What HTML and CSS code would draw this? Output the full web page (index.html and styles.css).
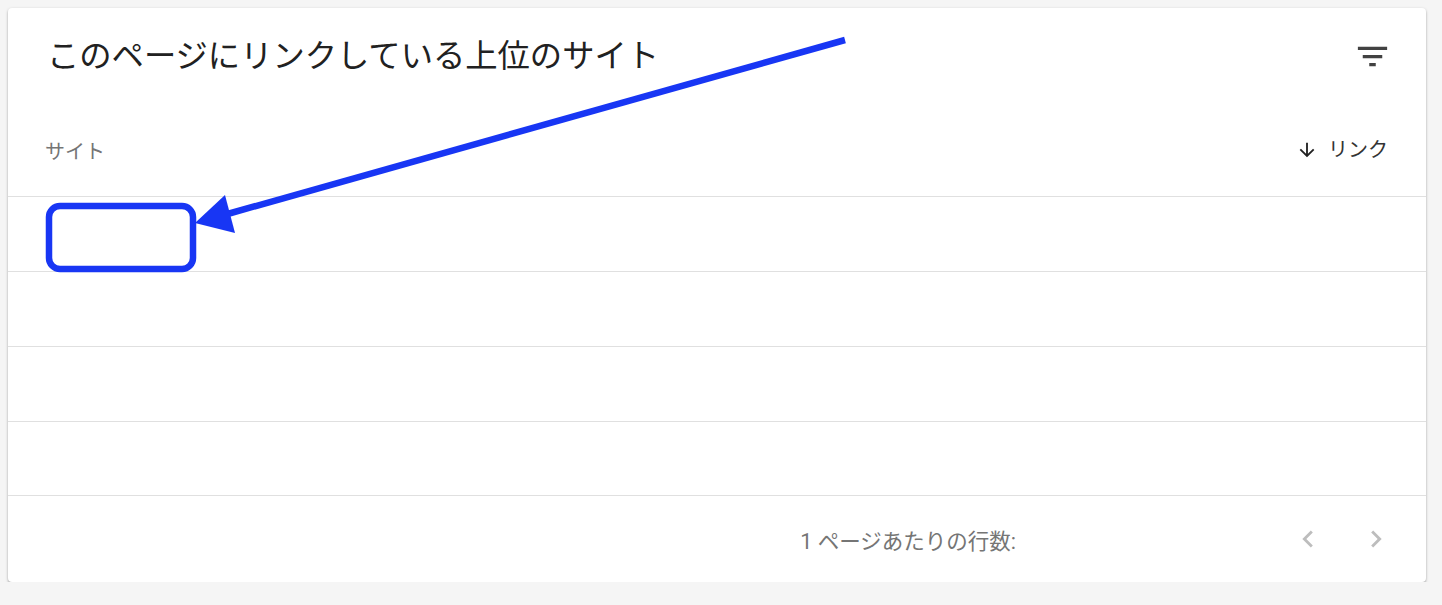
FILE: index.html
```html
<!DOCTYPE html>
<html lang="ja">
<head>
    <meta charset="UTF-8">
    <meta name="viewport" content="width=device-width, initial-scale=1.0">
    <title>このページにリンクしている上位のサイト</title>
    <link rel="stylesheet" href="styles.css">
</head>
<body>
    <div class="card">
        <div class="card-header">
            <h1>このページにリンクしている上位のサイト</h1>
            <svg class="filter-icon" viewBox="0 0 24 24"><path d="M10 18h4v-2h-4v2zM3 6v2h18V6H3zm3 7h12v-2H6v2z"/></svg>
        </div>
        <table class="sites">
            <thead>
                <tr>
                    <th class="col-site">サイト</th>
                    <th class="col-links">
                        <span class="sort">
                            <svg class="sort-icon" viewBox="0 0 24 24"><path d="M20 12l-1.41-1.41L13 16.17V4h-2v12.17l-5.58-5.59L4 12l8 8 8-8z"/></svg>
                            リンク
                        </span>
                    </th>
                </tr>
            </thead>
            <tbody>
                <tr><td></td><td></td></tr>
                <tr><td></td><td></td></tr>
                <tr><td></td><td></td></tr>
                <tr class="last-row"><td></td><td></td></tr>
            </tbody>
        </table>
        <div class="card-footer">
            <span class="rows-label">1 ページあたりの行数:</span>
            <button class="page-btn" type="button">
                <svg viewBox="0 0 24 24"><path d="M15.41 7.41L14 6l-6 6 6 6 1.41-1.41L10.83 12z"/></svg>
            </button>
            <button class="page-btn" type="button">
                <svg viewBox="0 0 24 24"><path d="M10 6L8.59 7.41 13.17 12l-4.58 4.59L10 18l6-6z"/></svg>
            </button>
        </div>
    </div>

    <!-- annotation drawn over the screenshot -->
    <svg class="annotation" width="1442" height="605" viewBox="0 0 1442 605">
        <rect x="49" y="206" width="144" height="63" rx="11" ry="11"/>
        <line x1="845" y1="40" x2="224" y2="215"/>
        <polygon points="195,223 225,195 235,233"/>
    </svg>
</body>
</html>
```

FILE: styles.css
```css
body {
    margin: 0;
    padding: 8px 16px 0 8px;
    background-color: #f5f5f5;
    font-family: Roboto, 'Noto Sans CJK JP', sans-serif;
}

.card {
    height: 574px;
    background-color: #fff;
    border-radius: 4px;
    box-shadow: 0 1px 3px rgba(0, 0, 0, 0.25), 0 2px 2px rgba(0, 0, 0, 0.12);
    display: flex;
    flex-direction: column;
}

.card-header {
    display: flex;
    justify-content: space-between;
    align-items: center;
    padding: 25px 34px 0 39px;
}

h1 {
    margin: 0;
    font-size: 32.3px;
    line-height: 46px;
    font-weight: 400;
    color: #212121;
}

.filter-icon {
    width: 39px;
    height: 39px;
    fill: #424242;
}

.sites {
    width: 100%;
    border-collapse: collapse;
}

.sites th {
    padding: 57px 0 28px;
    font-size: 20px;
    line-height: 28px;
    font-weight: 400;
}

.col-site {
    text-align: left;
    padding-left: 37px !important;
    color: #757575;
}

.col-links {
    text-align: right;
    padding-right: 38px !important;
    color: #333;
}

.sort {
    display: inline-flex;
    align-items: center;
    gap: 10px;
}

.sort-icon {
    width: 22px;
    height: 22px;
    fill: #212121;
}

.sites td {
    height: 74px;
    padding: 0;
    border-top: 1px solid #e0e0e0;
}

.sites .last-row td {
    height: 73px;
}

.card-footer {
    flex: 1;
    display: flex;
    justify-content: flex-end;
    align-items: center;
    padding-right: 33px;
    border-top: 1px solid #e0e0e0;
}

.rows-label {
    font-size: 21.5px;
    color: #757575;
    margin-right: 275px;
}

.page-btn {
    width: 34px;
    height: 34px;
    padding: 0;
    border: none;
    background: none;
}

.page-btn + .page-btn {
    margin-left: 34px;
}

.page-btn svg {
    width: 34px;
    height: 34px;
    fill: #bdbdbd;
}

.annotation {
    position: absolute;
    top: 0;
    left: 0;
    pointer-events: none;
}

.annotation rect,
.annotation line {
    fill: none;
    stroke: #1836f4;
    stroke-width: 6.5;
}

.annotation polygon {
    fill: #1836f4;
}
```
